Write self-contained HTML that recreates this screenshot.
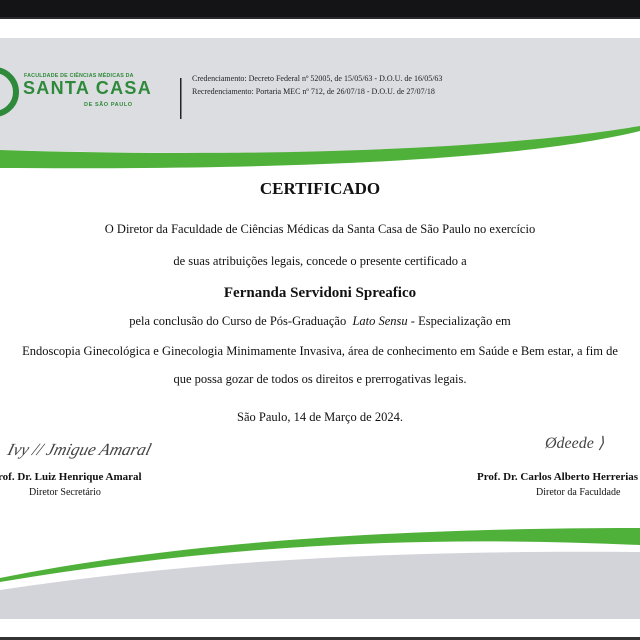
<!DOCTYPE html>
<html><head><meta charset="utf-8"><style>
body{margin:0;width:640px;height:640px;overflow:hidden;background:#fff;position:relative;font-family:"Liberation Serif",serif;color:#111}
.t{position:absolute;left:0;width:640px;text-align:center;font-size:12.5px;white-space:nowrap}
.a{position:absolute;white-space:nowrap}
</style></head><body>
<svg width="640" height="640" style="position:absolute;left:0;top:0">
<rect x="0" y="0" width="640" height="17" fill="#141416"/>
<rect x="0" y="17" width="640" height="2" fill="#2a2a2c"/>
<path d="M0 38 H640 V128 C520 150 300 158 0 150 Z" fill="#dcdde1"/>
<path d="M0 150 C250 158 500 150 640 126 L640 131 C520 160 300 170 0 168 Z" fill="#4fb03a"/>
<path d="M0 590 C200 560 400 550 640 552 V619 H0 Z" fill="#d3d4da"/>
<path d="M0 578 C150 548 350 528 640 528 V545 C420 535 220 545 0 582 Z" fill="#4fb03a"/>
<rect x="0" y="637" width="640" height="3" fill="#333"/>
<path d="M-6 70 A22 22 0 1 1 -6 114" stroke="#2e8a3a" stroke-width="6" fill="none"/>
<rect x="180" y="78" width="1.5" height="41" fill="#222"/>
</svg>
<div class="a" style="left:24px;top:73px;font-family:'Liberation Sans',sans-serif;font-size:5.3px;color:#2e8a3a;font-weight:bold;letter-spacing:0.2px">FACULDADE DE CIÊNCIAS MÉDICAS DA</div>
<div class="a" style="left:23px;top:78px;font-family:'Liberation Sans',sans-serif;font-size:18px;font-weight:bold;color:#2e8a3a;letter-spacing:1.3px">SANTA CASA</div>
<div class="a" style="left:84px;top:102px;font-family:'Liberation Sans',sans-serif;font-size:5.5px;color:#2e8a3a;font-weight:bold;letter-spacing:0.6px">DE SÃO PAULO</div>
<div class="a" style="left:192px;top:74px;font-size:8px;color:#222">Credenciamento: Decreto Federal nº 52005, de 15/05/63 - D.O.U. de 16/05/63</div>
<div class="a" style="left:192px;top:87px;font-size:8px;color:#222">Recredenciamento: Portaria MEC nº 712, de 26/07/18 - D.O.U. de 27/07/18</div>
<div class="t" style="top:179px;font-size:17px;font-weight:bold">CERTIFICADO</div>
<div class="t" style="top:222px">O Diretor da Faculdade de Ciências Médicas da Santa Casa de São Paulo no exercício</div>
<div class="t" style="top:254px">de suas atribuições legais, concede o presente certificado a</div>
<div class="t" style="top:285px;font-size:15px;font-weight:bold">Fernanda Servidoni Spreafico</div>
<div class="t" style="top:314px">pela conclusão do Curso de Pós-Graduação &nbsp;<i>Lato Sensu</i> - Especialização em</div>
<div class="t" style="top:344px">Endoscopia Ginecológica e Ginecologia Minimamente Invasiva, área de conhecimento em Saúde e Bem estar, a fim de</div>
<div class="t" style="top:372px">que possa gozar de todos os direitos e prerrogativas legais.</div>
<div class="t" style="top:410px">São Paulo, 14 de Março de 2024.</div>
<div class="a" style="left:8px;top:440px;font-style:italic;font-size:17px;color:#444;transform:skewX(-15deg)">Ivy // Jmigue Amaral</div>
<div class="a" style="left:-2px;top:471px;font-size:11px;font-weight:bold">rof. Dr. Luiz Henrique Amaral</div>
<div class="a" style="left:29px;top:487px;font-size:10px">Diretor Secretário</div>
<div class="a" style="left:545px;top:433px;font-style:italic;font-size:16px;color:#444">Ødeede ⟩</div>
<div class="a" style="left:477px;top:471px;font-size:11px;font-weight:bold">Prof. Dr. Carlos Alberto Herrerias d</div>
<div class="a" style="left:536px;top:487px;font-size:10px">Diretor da Faculdade</div>
</body></html>
